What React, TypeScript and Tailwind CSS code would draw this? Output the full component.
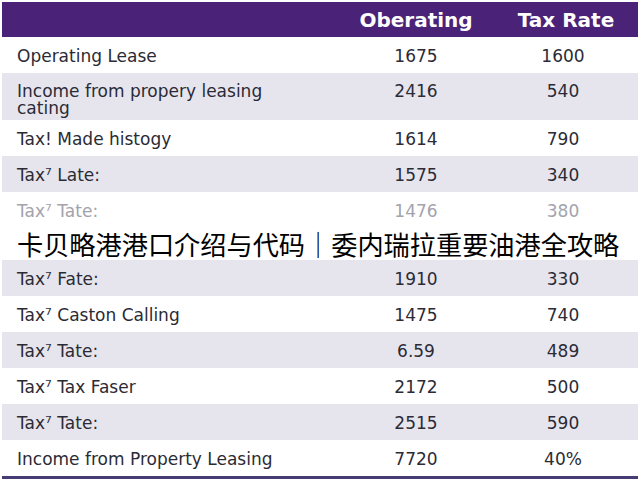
import React from "react";

type Row = {
  label: string;
  cont?: string;
  op: string;
  rate: string;
  faded?: boolean;
};

const ROWS_TOP: Row[] = [
  { label: "Operating Lease", op: "1675", rate: "1600" },
  { label: "Income from propery leasing", cont: "cating", op: "2416", rate: "540" },
  { label: "Tax! Made histogy", op: "1614", rate: "790" },
  { label: "Tax⁷ Late:", op: "1575", rate: "340" },
  { label: "Tax⁷ Tate:", op: "1476", rate: "380", faded: true },
];

const ROWS_BOTTOM: Row[] = [
  { label: "Tax⁷ Fate:", op: "1910", rate: "330" },
  { label: "Tax⁷ Caston Calling", op: "1475", rate: "740" },
  { label: "Tax⁷ Tate:", op: "6.59", rate: "489" },
  { label: "Tax⁷ Tax Faser", op: "2172", rate: "500" },
  { label: "Tax⁷ Tate:", op: "2515", rate: "590" },
  { label: "Income from Property Leasing", op: "7720", rate: "40%" },
];

function TableRow({ row, shaded }: { row: Row; shaded: boolean }) {
  const tone = row.faded ? "text-[#a3a3ad]" : "text-[#2b2b36]";
  if (row.cont) {
    return (
      <div
        className={`flex items-start h-[47px] pt-[10px] pl-[15px] pr-[8px] ${
          shaded ? "bg-[#e6e5ee]" : "bg-white"
        } ${tone}`}
      >
        <div className="flex-1 text-[17px] leading-[17px]">
          <div>{row.label}</div>
          <div>{row.cont}</div>
        </div>
        <div className="w-[132px] text-center text-[17px] leading-[17px]">{row.op}</div>
        <div className="w-[14px]" />
        <div className="w-[134px] text-center text-[17px] leading-[17px]">{row.rate}</div>
      </div>
    );
  }
  return (
    <div
      className={`flex items-center h-9 pt-[3px] pl-[15px] pr-[8px] ${
        shaded ? "bg-[#e6e5ee]" : "bg-white"
      } ${tone}`}
    >
      <div className="flex-1 text-[17px]">{row.label}</div>
      <div className="w-[132px] text-center text-[17px]">{row.op}</div>
      <div className="w-[14px]" />
      <div className="w-[134px] text-center text-[17px]">{row.rate}</div>
    </div>
  );
}

export default function App() {
  return (
    <div
      className="w-[640px] h-[480px] overflow-hidden bg-white pt-[2px] px-[2px]"
      style={{ fontFamily: '"DejaVu Sans", sans-serif' }}
    >
      <div className="flex items-center h-[35px] bg-[#4a2277] text-white font-bold text-[20px] pl-[15px] pr-[8px]">
        <div className="flex-1" />
        <div className="w-[132px] text-center">Oberating</div>
        <div className="w-[14px]" />
        <div className="w-[134px] text-center pl-[6px]">Tax Rate</div>
      </div>

      {ROWS_TOP.map((r, i) => (
        <TableRow key={"t" + i} row={r} shaded={i % 2 === 1} />
      ))}

      {/* caption band across the table */}
      <div
        className="h-[32px] flex items-center pl-[15px] bg-white text-black text-[26.2px] leading-none whitespace-nowrap"
        style={{ fontFamily: '"Noto Sans CJK SC", "DejaVu Sans", sans-serif' }}
      >
        卡贝略港港口介绍与代码｜委内瑞拉重要油港全攻略
      </div>

      {ROWS_BOTTOM.map((r, i) => (
        <TableRow key={"b" + i} row={r} shaded={i % 2 === 0} />
      ))}

      <div className="h-[3px] bg-[#463b73]" />
    </div>
  );
}
